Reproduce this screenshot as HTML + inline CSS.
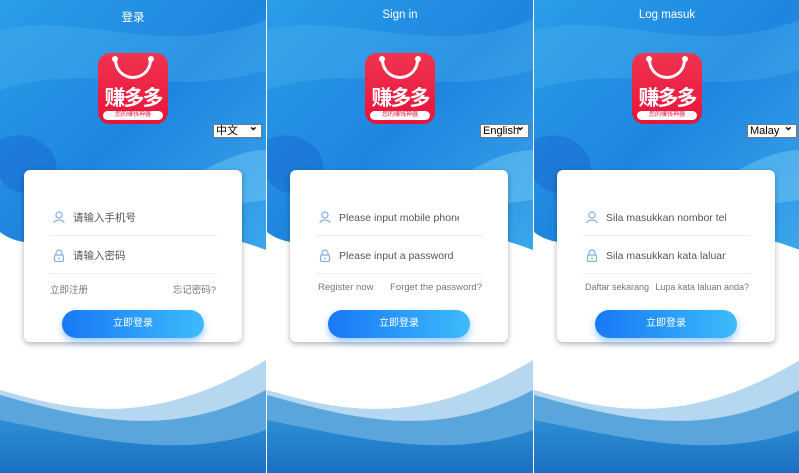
<!DOCTYPE html>
<html><head><meta charset="utf-8"><style>
*{margin:0;padding:0;box-sizing:border-box}
body{width:799px;height:473px;overflow:hidden;background:#fff;position:relative;font-family:"Liberation Sans","Noto Sans CJK SC",sans-serif}
.p{position:absolute;top:0;width:266px;height:473px;overflow:hidden;background:#fff}
.p svg.bg{position:absolute;left:0;top:0}
.t{position:absolute;top:9px;left:0;width:266px;text-align:center;color:#fff;font-size:11.5px}
.logo{position:absolute;left:98px;top:53px;width:70px;height:71px;border-radius:12px;background:linear-gradient(#f0344f,#e8133a);overflow:hidden}
.logo .h{position:absolute;left:16px;top:6px;width:38px;height:20px;border:3px solid #fff;border-top:none;border-radius:0 0 20px 20px}
.logo .h:before,.logo .h:after{content:"";position:absolute;top:-3px;width:6px;height:6px;border-radius:50%;background:#fff}
.logo .h:before{left:-5px}.logo .h:after{right:-5px}
.logo .n{position:absolute;top:29px;left:0;width:70px;text-align:center;color:#fff;font-weight:bold;font-size:21px;letter-spacing:-2px;font-family:"Noto Sans CJK SC",sans-serif}
.logo .s{position:absolute;left:5px;top:58px;width:60px;height:9px;border-radius:5px;background:#fff;color:#e8133a;font-size:6px;line-height:9px;text-align:center}
.sel{position:absolute;top:124px;height:14px;background:#fff;border:1px solid #777;font-size:11px;line-height:12px;padding-left:2px;color:#000}
.sel:after{content:"⌄";position:absolute;right:3px;top:-4px;font-weight:bold;font-size:11px}
.card{position:absolute;left:24px;top:170px;width:218px;height:172px;background:#fff;border-radius:6px;box-shadow:0 2px 6px rgba(0,0,0,.3)}
.row{position:absolute;left:26px;width:167px;height:36px;border-bottom:1px solid #eee;color:#555;font-size:10.5px;line-height:36px;white-space:nowrap;overflow:hidden}
.row span{position:absolute;left:23px;width:120px;overflow:hidden}
.row svg{position:absolute;left:3px;top:11px}
.lk{position:absolute;top:112px;font-size:9.5px;color:#777}
.btn{position:absolute;left:38px;top:140px;width:142px;height:28px;border-radius:14px;background:linear-gradient(90deg,#1878f6,#3dbbfb);color:#fff;font-size:10px;text-align:center;line-height:28px;box-shadow:0 4px 8px rgba(40,140,250,.45)}
.div{position:absolute;top:0;width:1px;height:473px;background:#fff}
</style></head><body>

<div class="p" style="left:0">
<svg class="bg" width="266" height="473">
<defs><linearGradient id="g" x1="0" y1="0" x2="1" y2="1"><stop offset="0" stop-color="#2a9de8"/><stop offset=".5" stop-color="#1f86e0"/><stop offset="1" stop-color="#3aa6ea"/></linearGradient>
<linearGradient id="w" x1="0" y1="0" x2="0" y2="1"><stop offset="0" stop-color="#2d8fd6"/><stop offset="1" stop-color="#1a6fc0"/></linearGradient></defs>
<path d="M0 0H266V250C200 225 120 215 60 238C30 248 10 240 0 232Z" fill="url(#g)"/>
<path d="M0 30C80 10 160 60 266 20V70C170 100 90 60 0 90Z" fill="#5cc0f2" opacity=".25"/>
<path d="M0 140C40 120 80 170 40 190C20 200 0 185 0 175Z" fill="#1458c8" opacity=".35"/>
<path d="M120 230C180 180 230 150 266 150V200C220 205 170 220 130 240Z" fill="#7fd2f7" opacity=".4"/>
<path d="M0 390C70 410 150 430 266 360V473H0Z" fill="#b5d7ef"/>
<path d="M0 395C90 420 170 440 266 390V473H0Z" fill="#5aa5dc"/>
<path d="M0 420C100 440 180 460 266 430V473H0Z" fill="url(#w)"/>
</svg>
<div class="t">登录</div>
<div class="logo"><div class="h"></div><div class="n">赚多多</div><div class="s">您的赚钱神器</div></div>
<div class="sel" style="left:213px;width:49px">中文</div>
<div class="card">
<div class="row" style="top:30px"><svg width="12" height="13" viewBox="0 0 12 13" fill="none" stroke="#7fb0e0" stroke-width="1.2"><circle cx="6" cy="4" r="3"/><path d="M1 12C1 8 11 8 11 12"/></svg><span>请输入手机号</span></div>
<div class="row" style="top:68px"><svg width="12" height="13" viewBox="0 0 12 13" fill="none" stroke="#7fb0e0" stroke-width="1.2"><path d="M3 6V4a3 3 0 0 1 6 0v2"/><rect x="1.5" y="6" width="9" height="6.5" rx="1.5"/><path d="M6 8.5v2"/></svg><span>请输入密码</span></div>
<div class="lk" style="left:26px">立即注册</div><div class="lk" style="right:26px">忘记密码?</div>
<div class="btn">立即登录</div>
</div>
</div>

<div class="p" style="left:267px">
<svg class="bg" width="266" height="473">
<path d="M0 0H266V250C200 225 120 215 60 238C30 248 10 240 0 232Z" fill="url(#g)"/>
<path d="M0 30C80 10 160 60 266 20V70C170 100 90 60 0 90Z" fill="#5cc0f2" opacity=".25"/>
<path d="M0 140C40 120 80 170 40 190C20 200 0 185 0 175Z" fill="#1458c8" opacity=".35"/>
<path d="M120 230C180 180 230 150 266 150V200C220 205 170 220 130 240Z" fill="#7fd2f7" opacity=".4"/>
<path d="M0 390C70 410 150 430 266 360V473H0Z" fill="#b5d7ef"/>
<path d="M0 395C90 420 170 440 266 390V473H0Z" fill="#5aa5dc"/>
<path d="M0 420C100 440 180 460 266 430V473H0Z" fill="url(#w)"/>
</svg>
<div class="t">Sign in</div>
<div class="logo"><div class="h"></div><div class="n">赚多多</div><div class="s">您的赚钱神器</div></div>
<div class="sel" style="left:213px;width:49px">English</div>
<div class="card" style="left:23px">
<div class="row" style="top:30px"><svg width="12" height="13" viewBox="0 0 12 13" fill="none" stroke="#7fb0e0" stroke-width="1.2"><circle cx="6" cy="4" r="3"/><path d="M1 12C1 8 11 8 11 12"/></svg><span>Please input mobile phone n</span></div>
<div class="row" style="top:68px"><svg width="12" height="13" viewBox="0 0 12 13" fill="none" stroke="#7fb0e0" stroke-width="1.2"><path d="M3 6V4a3 3 0 0 1 6 0v2"/><rect x="1.5" y="6" width="9" height="6.5" rx="1.5"/><path d="M6 8.5v2"/></svg><span>Please input a password</span></div>
<div class="lk" style="left:28px">Register now</div><div class="lk" style="right:26px">Forget the password?</div>
<div class="btn">立即登录</div>
</div>
</div>

<div class="p" style="left:534px;width:265px">
<svg class="bg" width="266" height="473">
<path d="M0 0H266V250C200 225 120 215 60 238C30 248 10 240 0 232Z" fill="url(#g)"/>
<path d="M0 30C80 10 160 60 266 20V70C170 100 90 60 0 90Z" fill="#5cc0f2" opacity=".25"/>
<path d="M0 140C40 120 80 170 40 190C20 200 0 185 0 175Z" fill="#1458c8" opacity=".35"/>
<path d="M120 230C180 180 230 150 266 150V200C220 205 170 220 130 240Z" fill="#7fd2f7" opacity=".4"/>
<path d="M0 390C70 410 150 430 266 360V473H0Z" fill="#b5d7ef"/>
<path d="M0 395C90 420 170 440 266 390V473H0Z" fill="#5aa5dc"/>
<path d="M0 420C100 440 180 460 266 430V473H0Z" fill="url(#w)"/>
</svg>
<div class="t">Log masuk</div>
<div class="logo"><div class="h"></div><div class="n">赚多多</div><div class="s">您的赚钱神器</div></div>
<div class="sel" style="left:213px;width:50px">Malay</div>
<div class="card" style="left:23px">
<div class="row" style="top:30px"><svg width="12" height="13" viewBox="0 0 12 13" fill="none" stroke="#7fb0e0" stroke-width="1.2"><circle cx="6" cy="4" r="3"/><path d="M1 12C1 8 11 8 11 12"/></svg><span>Sila masukkan nombor telef</span></div>
<div class="row" style="top:68px"><svg width="12" height="13" viewBox="0 0 12 13" fill="none" stroke="#7fb0e0" stroke-width="1.2"><path d="M3 6V4a3 3 0 0 1 6 0v2"/><rect x="1.5" y="6" width="9" height="6.5" rx="1.5"/><path d="M6 8.5v2"/></svg><span>Sila masukkan kata laluan a</span></div>
<div class="lk" style="left:28px;font-size:9px">Daftar sekarang</div><div class="lk" style="right:26px;font-size:9px">Lupa kata laluan anda?</div>
<div class="btn">立即登录</div>
</div>
</div>

<div class="div" style="left:266px"></div>
<div class="div" style="left:533px"></div>
</body></html>
